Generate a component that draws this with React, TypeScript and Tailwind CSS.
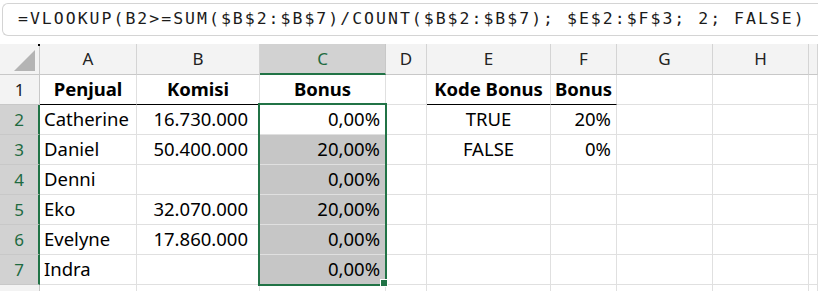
import React from "react"

const cols = ["A", "B", "C", "D", "E", "F", "G", "H", ""]

type Cell = { v: string; align?: "left" | "right" | "center"; bold?: boolean; under?: boolean }

const rows: Cell[][] = [
  [
    { v: "Penjual", align: "center", bold: true, under: true },
    { v: "Komisi", align: "center", bold: true, under: true },
    { v: "Bonus", align: "center", bold: true },
    { v: "" },
    { v: "Kode Bonus", align: "center", bold: true, under: true },
    { v: "Bonus", align: "center", bold: true, under: true },
  ],
  [{ v: "Catherine" }, { v: "16.730.000", align: "right" }, { v: "0,00%", align: "right" }, { v: "" }, { v: "TRUE", align: "center" }, { v: "20%", align: "right" }],
  [{ v: "Daniel" }, { v: "50.400.000", align: "right" }, { v: "20,00%", align: "right" }, { v: "" }, { v: "FALSE", align: "center" }, { v: "0%", align: "right" }],
  [{ v: "Denni" }, { v: "" }, { v: "0,00%", align: "right" }],
  [{ v: "Eko" }, { v: "32.070.000", align: "right" }, { v: "20,00%", align: "right" }],
  [{ v: "Evelyne" }, { v: "17.860.000", align: "right" }, { v: "0,00%", align: "right" }],
  [{ v: "Indra" }, { v: "" }, { v: "0,00%", align: "right" }],
  [],
]

export default function App() {
  return (
    <div className="w-[818px] h-[291px] overflow-hidden bg-white" style={{ fontFamily: '"Noto Sans", Arial, sans-serif' }}>
      {/* formula bar */}
      <div className="h-[44px] pt-[3px] pl-[2px] bg-white">
        <div
          className="h-[33px] border border-r-0 border-[#d4d4d4] rounded-l-[6px] bg-white flex items-center pl-[15px] whitespace-nowrap text-[16.5px] tracking-[2px] text-[#1b1b1b]"
          style={{ fontFamily: '"DejaVu Sans Mono", monospace' }}
        >
          =VLOOKUP(B2&gt;=SUM($B$2:$B$7)/COUNT($B$2:$B$7); $E$2:$F$3; 2; FALSE)
        </div>
      </div>

      <div className="relative grid grid-cols-[40px_97px_123px_126px_41px_124px_66px_96px_96px_1fr]">
        {/* column header row */}
        <div className="h-[31px] bg-[#f3f3f3] border-r border-b border-[#c8c8c8] relative">
          <div className="absolute right-[4px] bottom-[3px] w-0 h-0 border-l-[21px] border-l-transparent border-b-[21px] border-b-[#b4b4b4]" />
          <div className="absolute right-[-1px] top-0 w-[2px] h-[2px] bg-black" />
        </div>
        {cols.map((c) => (
          <div
            key={c || "x"}
            className={
              c === "C"
                ? "h-[31px] bg-[#d2d2d2] border-r border-[#c8c8c8] border-b-2 border-b-[#217346] text-[#1e6b41] flex items-center justify-center text-[17px]"
                : "h-[31px] bg-[#f3f3f3] border-r border-b border-[#d4d4d4] border-b-[#c8c8c8] text-[#222] flex items-center justify-center text-[17px]"
            }
          >
            {c}
          </div>
        ))}

        {rows.map((r, i) => {
          const n = i + 1
          const sel = n >= 2 && n <= 7
          return (
            <React.Fragment key={n}>
              <div
                className={
                  sel
                    ? "h-[30px] bg-[#d2d2d2] border-b border-[#c8c8c8] border-r-2 border-r-[#217346] text-[#1e6b41] flex items-center justify-center text-[17px]"
                    : "h-[30px] bg-[#f3f3f3] border-b border-r border-[#c8c8c8] text-[#222] flex items-center justify-center text-[17px]"
                }
              >
                {n <= 7 ? n : ""}
              </div>
              {cols.map((c, j) => {
                const cell = r[j] || { v: "" }
                const fill = c === "C" && n >= 3 && n <= 7
                const al =
                  cell.align === "right"
                    ? "justify-end pr-[5px]"
                    : cell.align === "center"
                      ? "justify-center"
                      : "justify-start pl-[4px]"
                const padB = c === "B" && cell.align === "right" ? "pr-[11px]" : ""
                return (
                  <div
                    key={c + n}
                    className={`h-[30px] border-r border-b border-[#e0e0e0] ${cell.under ? "border-b-black" : ""} ${
                      fill ? "bg-[#c6c6c6]" : "bg-white"
                    } flex items-end pb-[1px] leading-[28px] whitespace-nowrap overflow-visible text-[18.5px] text-black ${al} ${padB} ${
                      cell.bold ? "font-bold" : ""
                    }`}
                  >
                    {cell.v}
                  </div>
                )
              })}
            </React.Fragment>
          )
        })}

        {/* selection C2:C7 */}
        <div className="absolute left-[258px] top-[59px] w-[129px] h-[183px] border-2 border-[#217346] pointer-events-none" />
        <div className="absolute left-[380px] top-[235px] w-[8px] h-[8px] bg-[#217346] border border-white" />
      </div>
    </div>
  )
}
